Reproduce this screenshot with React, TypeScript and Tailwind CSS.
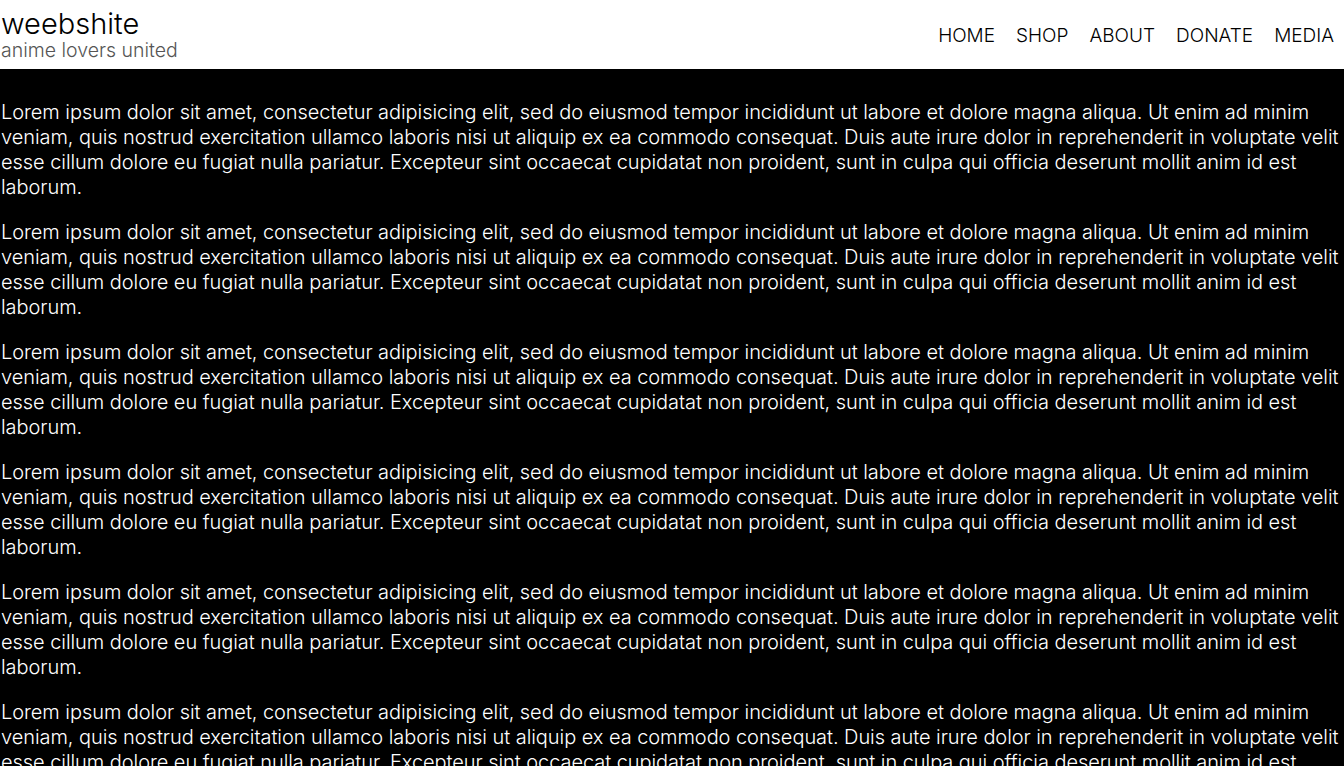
const LINES = [
  "Lorem ipsum dolor sit amet, consectetur adipisicing elit, sed do eiusmod tempor incididunt ut labore et dolore magna aliqua. Ut enim ad minim",
  "veniam, quis nostrud exercitation ullamco laboris nisi ut aliquip ex ea commodo consequat. Duis aute irure dolor in reprehenderit in voluptate velit",
  "esse cillum dolore eu fugiat nulla pariatur. Excepteur sint occaecat cupidatat non proident, sunt in culpa qui officia deserunt mollit anim id est",
  "laborum.",
];

const NAV = ["HOME", "SHOP", "ABOUT", "DONATE", "MEDIA"];

export default function App() {
  return (
    <div className="min-h-screen bg-black font-['Inter',sans-serif] font-light">
      <header className="flex h-[69px] items-start justify-between bg-white pl-[1px] pr-[10px]">
        <div className="pt-[8px]">
          <h1 className="text-[29px] leading-[32px] text-black">weebshite</h1>
          <p className="text-[19.5px] leading-[20px] text-[#555]">anime lovers united</p>
        </div>
        <nav className="flex gap-[21px] pt-[23px]">
          {NAV.map((item) => (
            <a key={item} href="#" className="text-[19px] leading-[25px] text-black">
              {item}
            </a>
          ))}
        </nav>
      </header>

      <main className="flex flex-col gap-[20px] pt-[31px] pl-[1px] text-white">
        {[0, 1, 2, 3, 4, 5].map((i) => (
          <p key={i} className="text-[20px] leading-[25px] tracking-[-0.06px]">
            {LINES.map((line, j) => (
              <span key={j} className="block whitespace-nowrap">
                {line}
              </span>
            ))}
          </p>
        ))}
      </main>
    </div>
  );
}
